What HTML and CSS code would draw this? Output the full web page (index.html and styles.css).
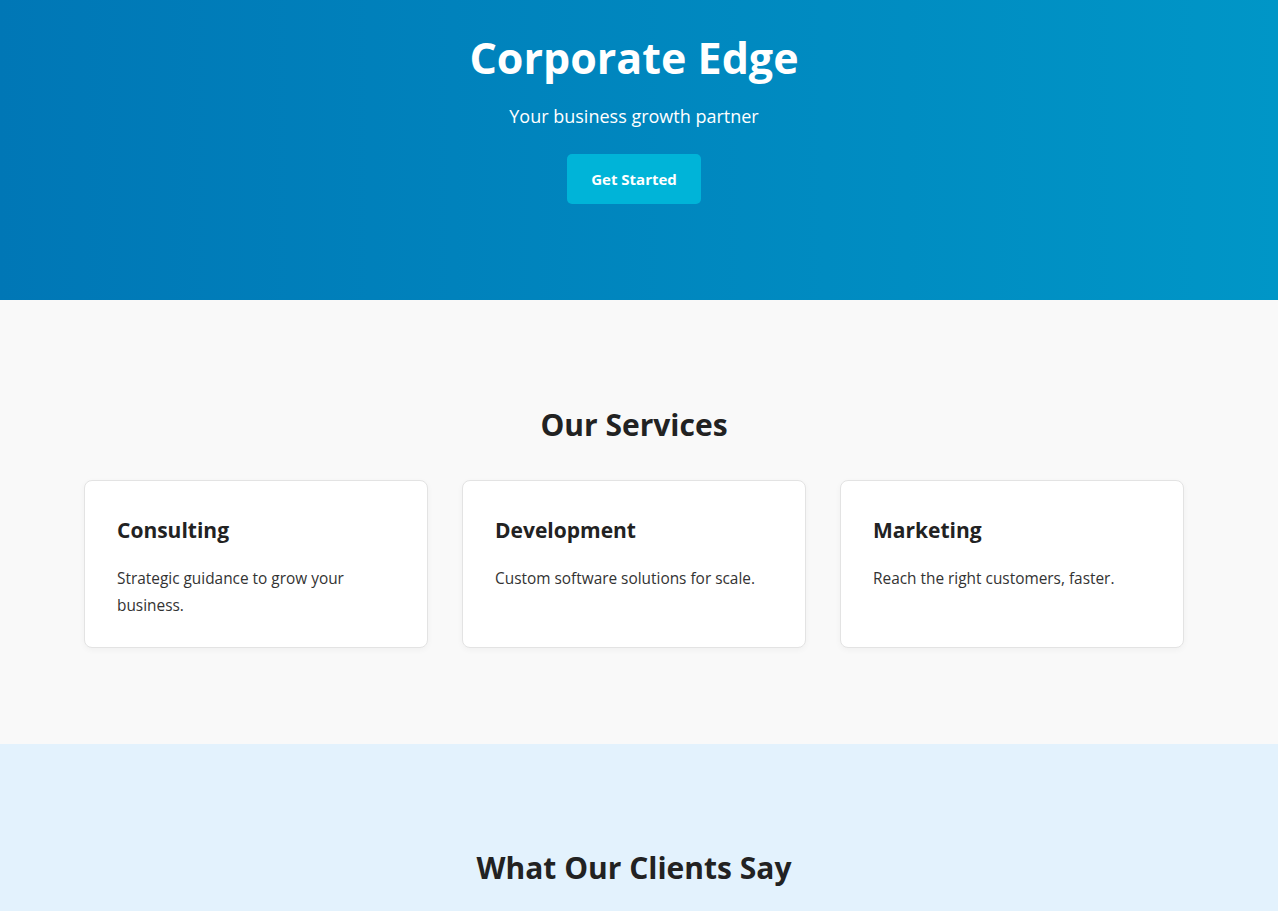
FILE: index.html
```html
<!DOCTYPE html>
<html lang="en">

<head>
    <meta charset="UTF-8">
    <meta name="viewport" content="width=device-width, initial-scale=1.0">
    <title>Corporate Edge</title>
    <link rel="stylesheet" href="styles.css">
</head>

<body>

    <!-- hero -->
    <header class="hero">
        <h1>Corporate Edge</h1>
        <p class="tagline">Your business growth partner</p>
        <a href="#services" class="btn">Get Started</a>
    </header>

    <!-- services -->
    <section class="services" id="services">
        <h2>Our Services</h2>
        <div class="cards">
            <div class="card">
                <h3>Consulting</h3>
                <p>Strategic guidance to grow your business.</p>
            </div>
            <div class="card">
                <h3>Development</h3>
                <p>Custom software solutions for scale.</p>
            </div>
            <div class="card">
                <h3>Marketing</h3>
                <p>Reach the right customers, faster.</p>
            </div>
        </div>
    </section>

    <!-- testimonials -->
    <section class="testimonials">
        <h2>What Our Clients Say</h2>
    </section>

</body>

</html>
```

FILE: styles.css
```css
body {
    font-family: "Open Sans", "Noto Sans", Arial, sans-serif;
    margin: 0;
    color: #222222;
    background-color: #f9f9f9;
}

.hero {
    background: linear-gradient(90deg, #0077b6, #0096c7);
    color: #ffffff;
    text-align: center;
    padding: 29px 10px 96px 0;
    height: 175px;
}

.hero h1 {
    font-size: 43px;
    line-height: 58px;
    margin: 0;
}

.tagline {
    font-size: 18px;
    line-height: 29px;
    margin: 15px 0 23px;
}

.btn {
    display: inline-block;
    background-color: #00b4d8;
    color: #ffffff;
    font-weight: bold;
    font-size: 15px;
    line-height: 24px;
    padding: 13px 24px;
    border-radius: 5px;
    text-decoration: none;
}

.services {
    padding: 98px 10px 96px 0;
    text-align: center;
}

h2 {
    font-size: 30px;
    line-height: 54px;
    margin: 0 0 28px;
}

.cards {
    display: grid;
    grid-template-columns: repeat(3, 1fr);
    gap: 34px;
    width: 1100px;
    margin: 0 auto;
    text-align: left;
}

.card {
    background-color: #ffffff;
    border: 1px solid #e3e3e3;
    border-radius: 8px;
    box-shadow: 0 2px 6px rgba(0, 0, 0, 0.04);
    padding: 30px 32px 32px;
    height: 104px;
}

.card h3 {
    font-size: 21px;
    line-height: 38px;
    margin: 0 0 16px;
}

.card p {
    font-size: 15.4px;
    line-height: 27px;
    margin: 0;
    color: #333333;
}

.testimonials {
    background-color: #e3f2fd;
    padding: 97px 10px 96px 0;
    text-align: center;
}
```
